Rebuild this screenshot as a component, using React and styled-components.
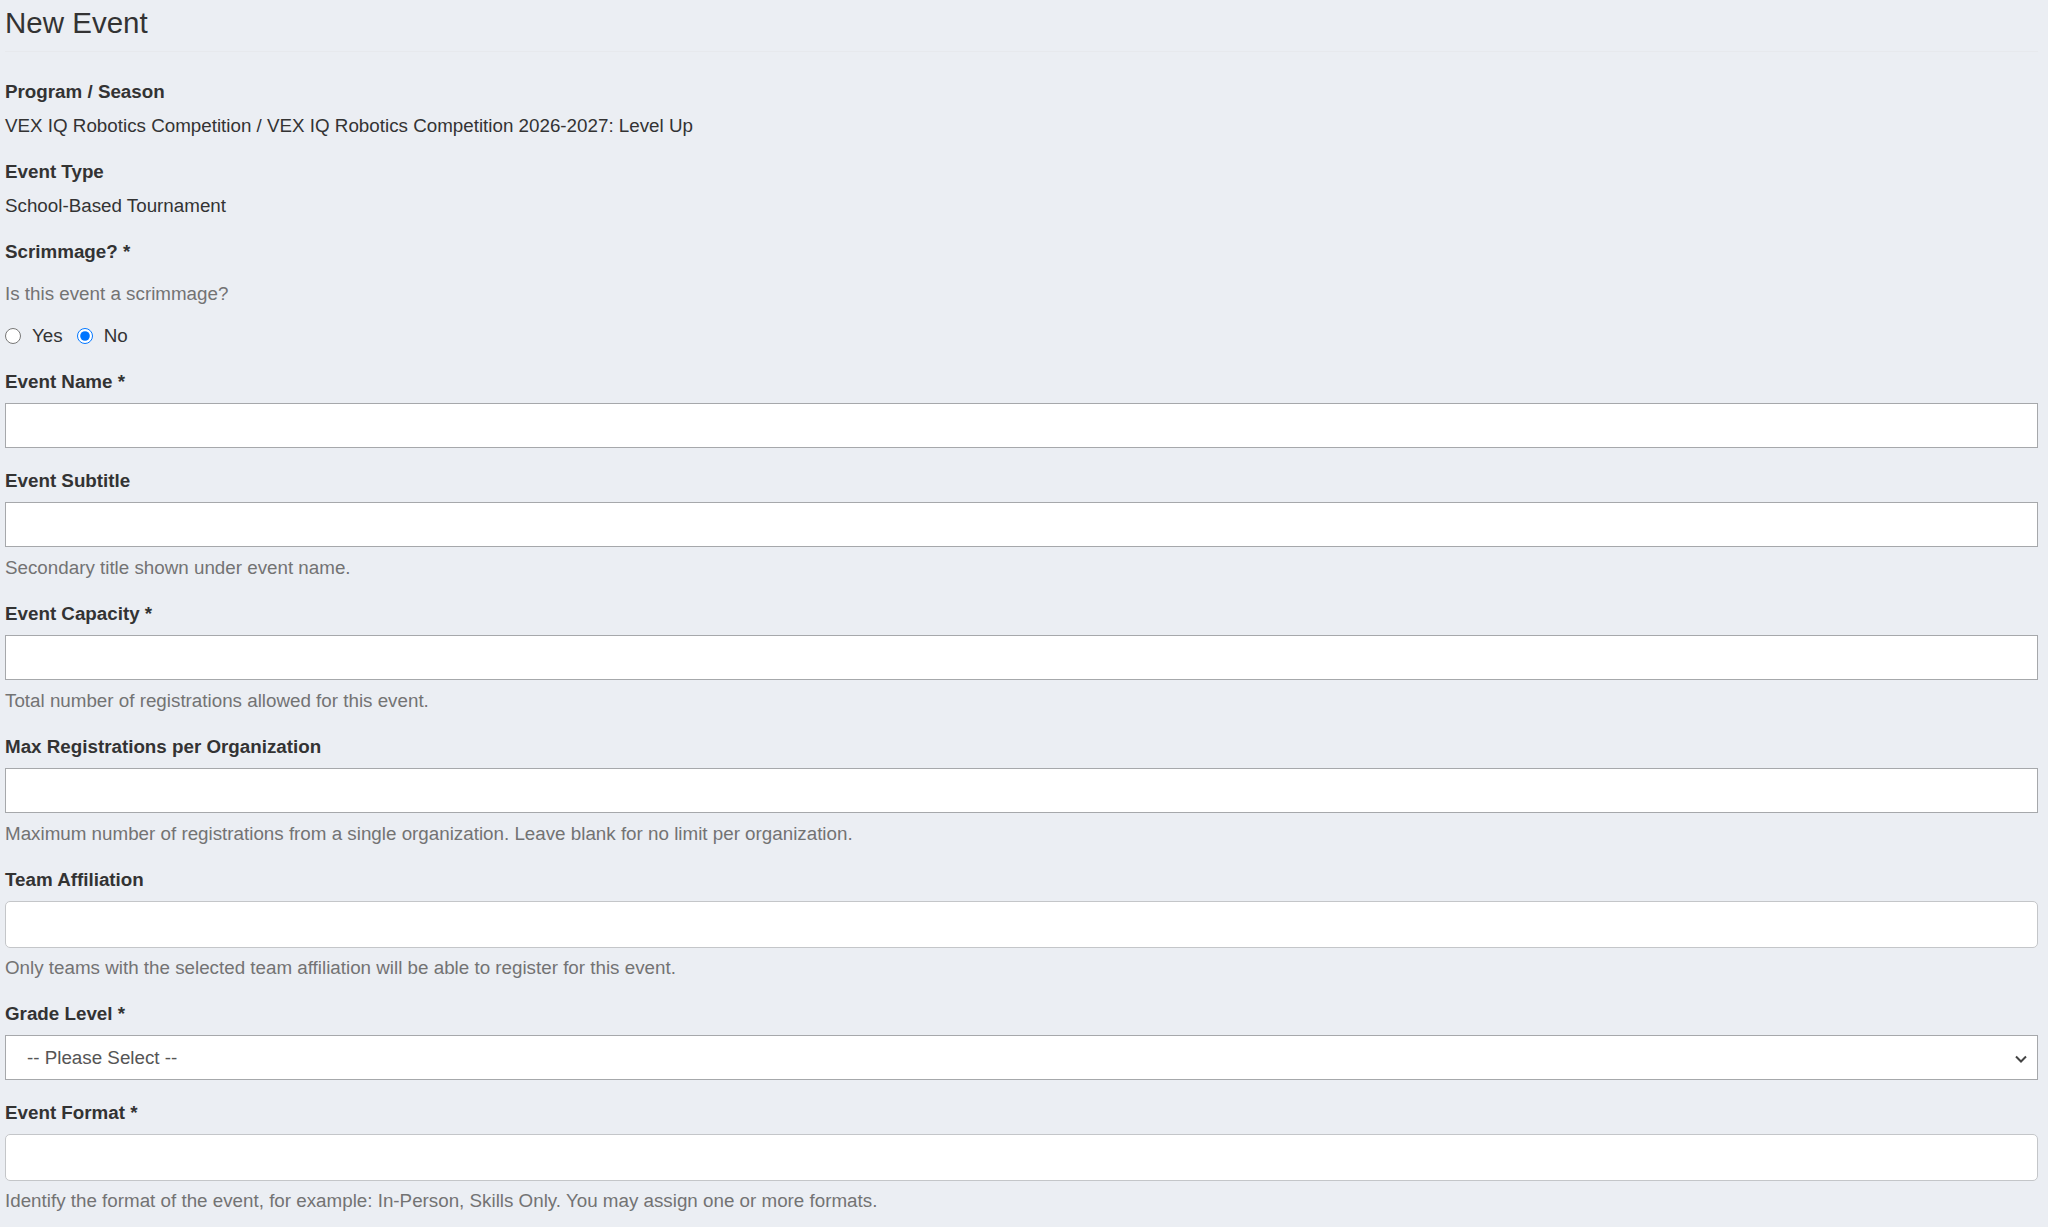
import styled, { createGlobalStyle } from "styled-components";

const GlobalStyle = createGlobalStyle`
  html, body {
    margin: 0;
    padding: 0;
    background: #ebeef3;
  }
  body {
    font-family: "Liberation Sans", Arial, sans-serif;
    font-size: 18.8px;
    color: #333;
  }
  * {
    box-sizing: border-box;
  }
`;

const Page = styled.div`
  padding: 7px 10px 0 5px;
  min-height: 100vh;
  background: #ebeef3;
`;

const Title = styled.h3`
  margin: 0;
  font-size: 29.5px;
  font-weight: 400;
  line-height: 32px;
  color: #333;
`;

const Rule = styled.hr`
  margin: 12px 0 27px 0;
  border: 0;
  border-top: 1px solid #e7e9ed;
`;

const Form = styled.form`
  display: flex;
  flex-direction: column;
`;

const Group = styled.div`
  display: flex;
  flex-direction: column;
  margin-bottom: 20px;
`;

const Label = styled.label`
  display: block;
  font-weight: 700;
  line-height: 26px;
  margin-bottom: 8px;
  color: #333;
`;

const Static = styled.div`
  line-height: 26px;
  color: #333;
`;

const Help = styled.div`
  line-height: 26px;
  color: #737373;
  margin-top: ${(p) => (p.$snug ? "7px" : "8px")};
  margin-bottom: ${(p) => (p.$top ? "16px" : "0")};
`;

const Input = styled.input`
  display: block;
  width: 100%;
  height: ${(p) => (p.$rounded ? "47px" : "45px")};
  padding: 6px 16px;
  font-family: inherit;
  font-size: 18.8px;
  color: #555;
  background: #fff;
  border: 1px solid ${(p) => (p.$rounded ? "#c4c6c9" : "#a6a8ab")};
  border-radius: ${(p) => (p.$rounded ? "5px" : "0")};
  outline: none;
`;

const SelectWrap = styled.div`
  position: relative;
  height: 45px;
`;

const Select = styled.select`
  appearance: none;
  width: 100%;
  height: 45px;
  padding: 0 40px 0 21px;
  font-family: inherit;
  font-size: 18.8px;
  color: #555;
  background: #fff;
  border: 1px solid #a6a8ab;
  border-radius: 0;
  outline: none;
`;

const Chevron = styled.svg`
  position: absolute;
  right: 10px;
  top: 50%;
  width: 14px;
  height: 14px;
  margin-top: -6px;
  pointer-events: none;
`;

const Radios = styled.div`
  display: flex;
  align-items: center;
  height: 26px;
`;

const RadioLabel = styled.label`
  display: flex;
  align-items: center;
  margin-right: 14px;
  color: #333;
  line-height: 26px;
`;

const Radio = styled.input`
  width: 16px;
  height: 16px;
  margin: 0 11px 0 0;
`;

const Req = () => <span> *</span>;

const App = () => {
  return (
    <Page>
      <GlobalStyle />
      <Title>New Event</Title>
      <Rule />
      <Form>
        <Group>
          <Label>Program / Season</Label>
          <Static>VEX IQ Robotics Competition / VEX IQ Robotics Competition 2026-2027: Level Up</Static>
        </Group>
        <Group>
          <Label>Event Type</Label>
          <Static>School-Based Tournament</Static>
        </Group>
        <Group>
          <Label>
            Scrimmage?
            <Req />
          </Label>
          <Help $top>Is this event a scrimmage?</Help>
          <Radios>
            <RadioLabel>
              <Radio type="radio" name="scrimmage" value="yes" />
              Yes
            </RadioLabel>
            <RadioLabel>
              <Radio type="radio" name="scrimmage" value="no" defaultChecked />
              No
            </RadioLabel>
          </Radios>
        </Group>
        <Group>
          <Label>
            Event Name
            <Req />
          </Label>
          <Input type="text" />
        </Group>
        <Group>
          <Label>Event Subtitle</Label>
          <Input type="text" />
          <Help>Secondary title shown under event name.</Help>
        </Group>
        <Group>
          <Label>
            Event Capacity
            <Req />
          </Label>
          <Input type="text" />
          <Help>Total number of registrations allowed for this event.</Help>
        </Group>
        <Group>
          <Label>Max Registrations per Organization</Label>
          <Input type="text" />
          <Help>
            Maximum number of registrations from a single organization. Leave blank for no limit per
            organization.
          </Help>
        </Group>
        <Group>
          <Label>Team Affiliation</Label>
          <Input type="text" $rounded />
          <Help $snug>Only teams with the selected team affiliation will be able to register for this event.</Help>
        </Group>
        <Group>
          <Label>
            Grade Level
            <Req />
          </Label>
          <SelectWrap>
            <Select defaultValue="">
              <option value="">-- Please Select --</option>
              <option value="es">Elementary School</option>
              <option value="ms">Middle School</option>
            </Select>
            <Chevron viewBox="0 0 14 14">
              <path d="M2 4.5 L7 9.5 L12 4.5" fill="none" stroke="#444" strokeWidth="2" />
            </Chevron>
          </SelectWrap>
        </Group>
        <Group>
          <Label>
            Event Format
            <Req />
          </Label>
          <Input type="text" $rounded />
          <Help $snug>
            Identify the format of the event, for example: In-Person, Skills Only. You may assign one or
            more formats.
          </Help>
        </Group>
      </Form>
    </Page>
  );
};

export default App;
